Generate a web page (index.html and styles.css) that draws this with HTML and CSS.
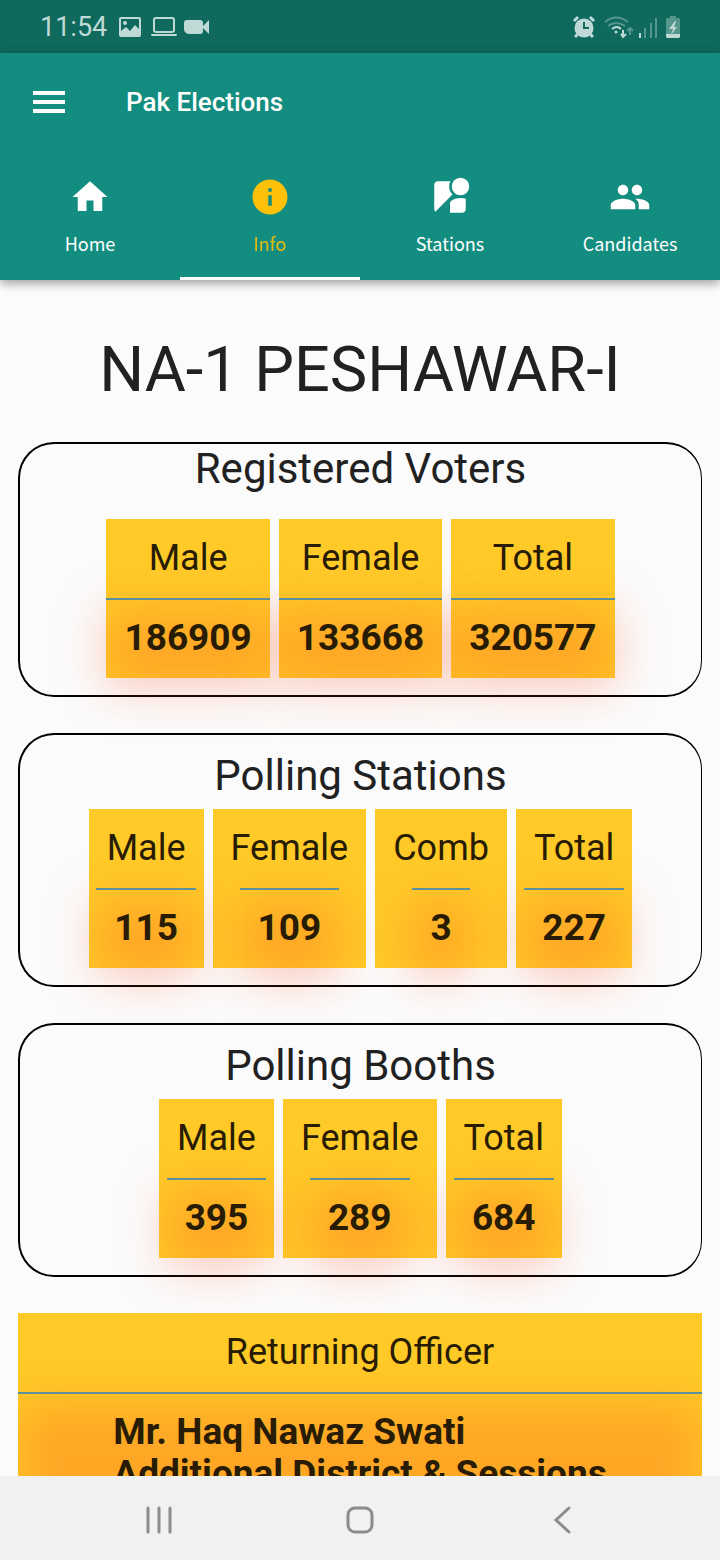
FILE: index.html
```
<!DOCTYPE html>
<html lang="en">
<head>
    <meta charset="UTF-8">
    <meta name="viewport" content="width=device-width, initial-scale=1.0">
    <title>Pak Elections</title>
    <link rel="stylesheet" href="styles.css">
</head>
<body>

    <!-- Phone status bar -->
    <div class="status-bar">
        <span class="clock">11:54</span>
        <svg class="image-icon" width="22" height="20" viewBox="0 0 22 20">
            <path fill-rule="evenodd" d="M2 0h18a2 2 0 0 1 2 2v16a2 2 0 0 1-2 2H2a2 2 0 0 1-2-2V2a2 2 0 0 1 2-2zM2 2v12l5-4 4 4 5-6 4 4V2zM6 4a2 2 0 1 1 0 4 2 2 0 0 1 0-4z"/>
        </svg>
        <svg class="laptop-icon" width="26" height="20" viewBox="0 0 26 20">
            <rect x="3" y="1" width="20" height="14" rx="2" fill="none" stroke="currentColor" stroke-width="2"/>
            <path d="M0 17h26v1l-1 1H1l-1-1z"/>
        </svg>
        <svg class="video-icon" width="26" height="16" viewBox="0 0 26 16">
            <path d="M3 1h13a3 3 0 0 1 3 3v8a3 3 0 0 1-3 3H5a5 5 0 0 1-5-5V4a3 3 0 0 1 3-3zM19 7l6-6v14l-6-6z"/>
        </svg>

        <div class="status-right">
            <svg width="24" height="24" viewBox="0 0 24 24">
                <circle cx="12" cy="13" r="9.500"/>
                <path d="M2 6l4-4M22 6l-4-4M6 19l-3 3M18 19l3 3" stroke="currentColor" stroke-width="3"/>
                <path d="M12 7v6h5" fill="none" stroke="#0f695d" stroke-width="2"/>
            </svg>
            <svg width="30" height="24" viewBox="0 0 30 24" fill="none" stroke="currentColor" stroke-width="2">
                <path class="faint" d="M1 7q11-9 23 0M4 11q8-6 17 0M26 20v-7M23 16l3-3 3 3"/>
                <path d="M8 14q5-4 9 0M19 15v7M17 19l2 3 3-3"/>
                <circle cx="12" cy="17" r="1.500" fill="currentColor" stroke="none"/>
            </svg>
            <svg width="20" height="24" viewBox="0 0 20 24" fill="none" stroke="currentColor" stroke-width="2">
                <path d="M2 18v5"/>
                <path class="faint" d="M7 13v10M13 8v15M18 3v20"/>
            </svg>
            <svg class="battery-icon" width="14" height="24" viewBox="0 0 14 24">
                <path class="faint" d="M4 1h6v2h3l1 1v16H0V4l1-1h3z"/>
                <path d="M0 19h14v3l-1 1H1l-1-1zM9 6l-6 8h4l-2 6 6-8H8l2-6z"/>
            </svg>
        </div>
    </div>

    <!-- App bar and tabs -->
    <header class="app-header">
        <div class="app-bar">
            <button class="menu-button" type="button" aria-label="Open menu">
                <svg width="32" height="22" viewBox="0 0 32 22">
                    <path d="M0 0h32v4H0zM0 9h32v4H0zM0 18h32v4H0z"/>
                </svg>
            </button>
            <h1>Pak Elections</h1>
        </div>
        <nav class="tabs">
            <a href="#home">
                <svg width="42" height="42" viewBox="0 0 24 24"><path d="M10 20v-6h4v6h5v-8h3L12 3 2 12h3v8z"/></svg>
                <span>Home</span>
            </a>
            <a href="#info" class="active">
                <svg width="42" height="42" viewBox="0 0 24 24"><path d="M12 2C6.480 2 2 6.480 2 12s4.480 10 10 10 10-4.480 10-10S17.520 2 12 2zm1 15h-2v-6h2v6zm0-8h-2V7h2v2z"/></svg>
                <span>Info</span>
            </a>
            <a href="#stations">
                <svg width="42" height="42" viewBox="0 0 24 24">
                    <path d="M12.560 14.330c-.34.27-.56.7-.56 1.170V21h7c1.100 0 2-.9 2-2v-5.980c-.94-.33-1.950-.52-3-.52-2.030 0-3.930.7-5.440 1.830z"/>
                    <circle cx="18" cy="6" r="5"/>
                    <path d="M11.500 6c0-1.080.27-2.100.74-3H5c-1.100 0-2 .9-2 2v14c0 .55.23 1.050.59 1.410l9.820-9.820C12.230 9.420 11.500 7.800 11.500 6z"/>
                </svg>
                <span>Stations</span>
            </a>
            <a href="#candidates">
                <svg width="42" height="42" viewBox="0 0 24 24"><path d="M16 11c1.660 0 2.990-1.340 2.990-3S17.660 5 16 5c-1.660 0-3 1.340-3 3s1.340 3 3 3zm-8 0c1.660 0 2.990-1.340 2.990-3S9.660 5 8 5C6.340 5 5 6.340 5 8s1.340 3 3 3zm0 2c-2.330 0-7 1.170-7 3.500V19h14v-2.500c0-2.330-4.670-3.500-7-3.500zm8 0c-.29 0-.62.02-.97.05 1.160.84 1.970 1.970 1.970 3.450V19h6v-2.500c0-2.330-4.670-3.500-7-3.500z"/></svg>
                <span>Candidates</span>
            </a>
        </nav>
    </header>

    <!-- Constituency details -->
    <main class="content" id="info">
        <h2>NA-1 PESHAWAR-I</h2>

        <section class="group voters">
            <h3>Registered Voters</h3>
            <dl class="cards">
                <div class="card"><dt>Male</dt><dd><span>186909</span></dd></div>
                <div class="card"><dt>Female</dt><dd><span>133668</span></dd></div>
                <div class="card"><dt>Total</dt><dd><span>320577</span></dd></div>
            </dl>
        </section>

        <section class="group">
            <h3>Polling Stations</h3>
            <dl class="cards">
                <div class="card"><dt>Male</dt><dd><span>115</span></dd></div>
                <div class="card"><dt>Female</dt><dd><span>109</span></dd></div>
                <div class="card"><dt>Comb</dt><dd><span>3</span></dd></div>
                <div class="card"><dt>Total</dt><dd><span>227</span></dd></div>
            </dl>
        </section>

        <section class="group">
            <h3>Polling Booths</h3>
            <dl class="cards">
                <div class="card"><dt>Male</dt><dd><span>395</span></dd></div>
                <div class="card"><dt>Female</dt><dd><span>289</span></dd></div>
                <div class="card"><dt>Total</dt><dd><span>684</span></dd></div>
            </dl>
        </section>

        <dl class="card officer">
            <dt>Returning Officer</dt>
            <dd><span>Mr. Haq Nawaz Swati<br>Additional District &amp; Sessions</span></dd>
        </dl>
    </main>

    <!-- System navigation -->
    <div class="system-nav">
        <button type="button" aria-label="Recent apps">
            <svg width="28" height="28" viewBox="0 0 28 28"><path d="M3 2v24M14 2v24M25 2v24"/></svg>
        </button>
        <button type="button" aria-label="Home screen">
            <svg width="28" height="28" viewBox="0 0 28 28"><rect x="2" y="2" width="24" height="24" rx="7"/></svg>
        </button>
        <button type="button" aria-label="Back">
            <svg width="28" height="28" viewBox="0 0 28 28"><path d="M22 2L9 14l13 12"/></svg>
        </button>
    </div>

</body>
</html>
```
FILE: styles.css
```
/* General */
* {
    box-sizing: border-box;
}

body {
    margin: 0;
    height: 100vh;
    display: flex;
    flex-direction: column;
    background-color: #fbfbfb;
    color: #212121;
    font-family: Roboto, sans-serif;
}

h1, h2, h3, dl, dt, dd {
    margin: 0;
    font-weight: 400;
}

button {
    border: none;
    padding: 0;
    background: none;
    color: inherit;
    cursor: pointer;
}

svg {
    display: block;
    fill: currentColor;
    flex-shrink: 0;
}

svg[fill="none"] {
    fill: none;
}

/* Status bar */
.status-bar {
    flex: none;
    height: 53px;
    padding: 0 40px;
    display: flex;
    align-items: center;
    background-color: #0f695d;
    color: #bfdad6;
}

.clock {
    font-size: 27px;
}

.image-icon {
    margin-left: 12px;
}

.laptop-icon {
    margin-left: 10px;
}

.video-icon {
    margin-left: 7px;
}

.status-right {
    margin-left: auto;
    display: flex;
    align-items: center;
    gap: 8px;
}

.status-right svg + svg + svg {
    margin-left: -4px;
}

.status-right .battery-icon {
    margin-left: 0;
}

.faint {
    opacity: 0.4;
}

/* Header */
.app-header {
    flex: none;
    position: relative;
    z-index: 1;
    background-color: #138d7f;
    color: #ffffff;
    box-shadow: 0 3px 10px rgba(0, 0, 0, 0.4);
}

.app-bar {
    height: 98px;
    padding: 0 33px;
    display: flex;
    align-items: center;
    gap: 61px;
}

h1 {
    font-size: 26px;
    font-weight: 500;
}

.tabs {
    display: grid;
    grid-template-columns: repeat(4, 1fr);
}

.tabs a {
    height: 129px;
    padding-top: 25px;
    display: flex;
    flex-direction: column;
    align-items: center;
    gap: 10px;
    border-bottom: 3px solid transparent;
    color: #ffffff;
    font: 18px/30px "Noto Sans CJK SC", sans-serif;
    text-decoration: none;
}

.tabs .active {
    border-bottom-color: #ffffff;
    color: #ffc107;
}

.tabs .active span {
    opacity: 0.9;
}

/* Content */
.content {
    flex: 1;
    min-height: 0;
    margin: 0 18px;
    padding-top: 54px;
    overflow: auto;
    scrollbar-width: none;
}

h2 {
    margin-bottom: 36px;
    font-size: 63px;
    line-height: 72px;
    text-align: center;
}

.group {
    margin-bottom: 36px;
    padding: 16px 0 17px;
    border: 2px solid #000000;
    border-right-width: 1px;
    border-radius: 36px;
}

h3 {
    margin-bottom: 8px;
    font-size: 42px;
    line-height: 50px;
    text-align: center;
}

.voters {
    padding-top: 0;
}

.voters h3 {
    margin-bottom: 25px;
}

/* Yellow cards */
.cards {
    display: flex;
    justify-content: center;
    gap: 9px;
}

.card {
    display: flex;
    flex-direction: column;
    align-items: center;
    background-color: #ffca28;
    color: #281c04;
    font-size: 36px;
    line-height: 42px;
}

.card dt {
    padding: 18px 18px 19px;
}

.card dd {
    position: relative;
    padding: 17px 18px 19px;
    border-top: 2px solid #4f96a4;
    font-size: 37px;
    font-weight: 700;
}

/* Orange glow behind the value, spills over the card */
.card dd::before {
    content: "";
    position: absolute;
    top: 10px;
    right: 0;
    bottom: -10px;
    left: 0;
    background-color: rgba(255, 87, 34, 0.3);
    filter: blur(24px);
}

.card span {
    position: relative;
}

.officer dd {
    width: 100%;
    display: flex;
    justify-content: center;
}

/* System navigation */
.system-nav {
    flex: none;
    position: relative;
    height: 84px;
    padding: 4px 58px 0;
    display: grid;
    grid-template-columns: repeat(3, 1fr);
    align-items: center;
    justify-items: center;
    background-color: #f1f1f1;
    color: #8c8c8c;
}

.system-nav svg {
    fill: none;
    stroke: currentColor;
    stroke-width: 3;
    stroke-linecap: round;
}
```
